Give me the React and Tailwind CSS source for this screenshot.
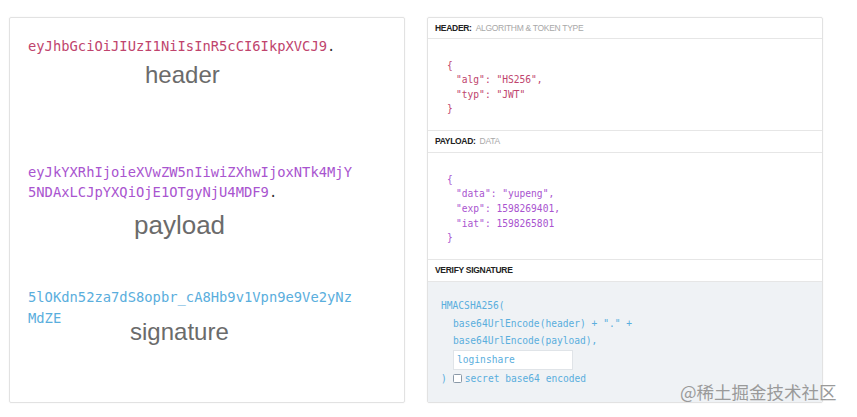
export default function App() {
  const mono = { fontFamily: '"DejaVu Sans Mono", "Liberation Mono", monospace' };
  return (
    <div className="relative w-[857px] h-[417px] bg-white overflow-hidden" style={{ fontFamily: '"Liberation Sans", Arial, sans-serif' }}>
      <div className="flex gap-[22px] pl-[9px] pt-[17px]">
        {/* Left panel */}
        <div className="w-[396px] h-[386px] border border-[#e2e2e2] rounded-[2px] pl-[18px] pt-[18px] shadow-[0_0_2px_rgba(0,0,0,0.06)]">
          <div className="text-[13.8px] leading-[20px] text-[#c0446d]" style={mono}>
            eyJhbGciOiJIUzI1NiIsInR5cCI6IkpXVCJ9<span className="text-[#333]">.</span>
          </div>
          <div className="ml-[117px] text-[24px] leading-[28px] text-[#6b6b6b] mt-[5px]">header</div>
          <div className="mt-[73px] text-[13.8px] leading-[20px] text-[#a954cf]" style={mono}>
            <div>eyJkYXRhIjoieXVwZW5nIiwiZXhwIjoxNTk4MjY</div>
            <div>5NDAxLCJpYXQiOjE1OTgyNjU4MDF9<span className="text-[#333]">.</span></div>
          </div>
          <div className="ml-[106px] text-[26px] leading-[30px] text-[#6b6b6b] mt-[8px]">payload</div>
          <div className="mt-[47px] text-[13.8px] leading-[21px] text-[#5aaedd]" style={mono}>
            <div>5lOKdn52za7dS8opbr_cA8Hb9v1Vpn9e9Ve2yNz</div>
            <div>MdZE</div>
          </div>
          <div className="ml-[102px] text-[24px] leading-[28px] text-[#6b6b6b] -mt-[11px]">signature</div>
        </div>

        {/* Right panel */}
        <div className="w-[396px] h-[386px] border border-[#e2e2e2] rounded-[2px] flex flex-col shadow-[0_0_2px_rgba(0,0,0,0.06)]">
          <div className="h-[21px] flex items-center pl-[7px] border-b border-[#e6e6e6] text-[8.5px] tracking-[-0.3px]">
            <span className="font-bold text-[#222] mr-[4px]">HEADER:</span>
            <span className="text-[#a8a8a8]">ALGORITHM &amp; TOKEN TYPE</span>
          </div>
          <div className="h-[92px] pl-[19px] pt-[19.5px] text-[9.6px] leading-[14.5px] text-[#c0446d] border-b border-[#e6e6e6]" style={mono}>
            <div>{'{'}</div>
            <div className="pl-[9px]">"alg": "HS256",</div>
            <div className="pl-[9px]">"typ": "JWT"</div>
            <div>{'}'}</div>
          </div>
          <div className="h-[22px] flex items-center pl-[7px] border-b border-[#e6e6e6] text-[8.5px] tracking-[-0.3px]">
            <span className="font-bold text-[#222] mr-[4px]">PAYLOAD:</span>
            <span className="text-[#a8a8a8]">DATA</span>
          </div>
          <div className="h-[107px] pl-[19px] pt-[19.5px] text-[9.6px] leading-[14.7px] text-[#a954cf] border-b border-[#e6e6e6]" style={mono}>
            <div>{'{'}</div>
            <div className="pl-[9px]">"data": "yupeng",</div>
            <div className="pl-[9px]">"exp": 1598269401,</div>
            <div className="pl-[9px]">"iat": 1598265801</div>
            <div>{'}'}</div>
          </div>
          <div className="h-[22px] flex items-center pl-[7px] border-b border-[#e6e6e6] text-[8.5px] tracking-[-0.3px]">
            <span className="font-bold text-[#222]">VERIFY SIGNATURE</span>
          </div>
          <div className="flex-1 bg-[#eff2f5] pl-[13px] pt-[15px] text-[9.6px] leading-[17.5px] text-[#5aaedd]" style={mono}>
            <div>HMACSHA256(</div>
            <div className="pl-[12px]">base64UrlEncode(header) + "." +</div>
            <div className="pl-[12px]">base64UrlEncode(payload),</div>
            <div className="pl-[12px]">
              <div className="w-[120px] h-[20px] bg-white border border-[#e0e4e8] flex items-center pl-[3px]">loginshare</div>
            </div>
            <div className="flex items-center">
              <span>)</span>
              <span className="ml-[6px] w-[9px] h-[9px] border border-[#8a99a8] rounded-[1.5px] bg-white inline-block"></span>
              <span className="ml-[3px]">secret base64 encoded</span>
            </div>
          </div>
        </div>
      </div>
      <div className="absolute left-[680px] top-[381px] text-[17.5px] leading-[22px] text-[#9a9a9a]" style={{ fontFamily: '"Noto Sans CJK SC", "Liberation Sans", sans-serif' }}>
        @稀土掘金技术社区
      </div>
    </div>
  );
}
